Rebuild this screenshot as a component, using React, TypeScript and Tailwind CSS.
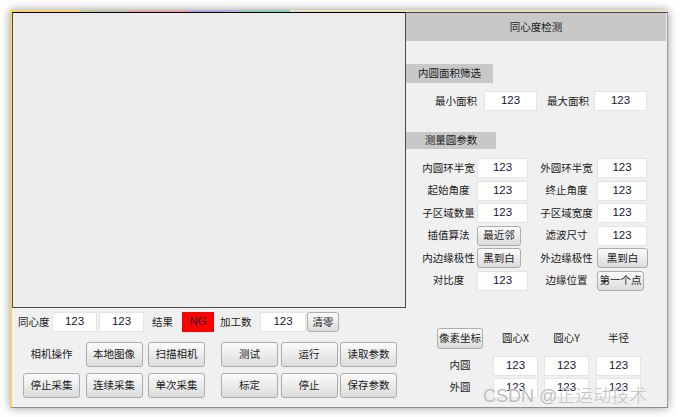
import type { ReactNode } from 'react'

function Btn({ children, className = '' }: { children: ReactNode; className?: string }) {
  return (
    <div
      className={`flex items-center justify-center rounded-[3px] border border-[#acacac] bg-linear-to-b from-[#fbfbfb] to-[#dcdcdc] text-[10.5px] text-[#1a1a1a] whitespace-nowrap ${className}`}
    >
      {children}
    </div>
  )
}

function Field({ className = '', value = '123' }: { className?: string; value?: string }) {
  return (
    <div
      className={`flex items-center justify-center bg-white border border-[#e4e4e4] font-['Liberation_Sans',sans-serif] text-[11.5px] text-[#161633] ${className}`}
    >
      {value}
    </div>
  )
}

function Label({ children, className = '' }: { children: ReactNode; className?: string }) {
  return <span className={`text-center text-[10.5px] text-[#1a1a1a] whitespace-nowrap ${className}`}>{children}</span>
}

const params: { l: string; left: 'f' | string; r: string; right: 'f' | string }[] = [
  { l: '内圆环半宽', left: 'f', r: '外圆环半宽', right: 'f' },
  { l: '起始角度', left: 'f', r: '终止角度', right: 'f' },
  { l: '子区域数量', left: 'f', r: '子区域宽度', right: 'f' },
  { l: '插值算法', left: '最近邻', r: '滤波尺寸', right: 'f' },
  { l: '内边缘极性', left: '黑到白', r: '外边缘极性', right: '黑到白' },
  { l: '对比度', left: 'f', r: '边缘位置', right: '第一个点' },
]

export default function App() {
  return (
    <div className="relative w-[680px] h-[417px] bg-white overflow-hidden font-['Noto_Sans_CJK_SC',sans-serif] leading-none">
      <div className="absolute left-[10px] top-[10px] w-[658px] h-[398px] bg-[#f0f0f0] shadow-[0_0_9px_rgba(0,0,0,0.4)] flex flex-col">
        {/* title strip */}
        <div className="flex h-[2px] shrink-0">
          <div className="w-[71px] bg-[#f6d56a]" />
          <div className="w-[49px] bg-[#c3c7a8]" />
          <div className="w-[58px] bg-[#e9a7a4]" />
          <div className="w-[50px] bg-[#b8a9d8]" />
          <div className="w-[52px] bg-[#93cbb6]" />
          <div className="flex-1 bg-[#e9e0c0]" />
        </div>

        <div className="flex flex-1 min-h-0 border-l-2 border-[#f3d46a] border-b border-b-[#8e8e8e]">
          {/* left: image view and controls */}
          <div className="w-[394px] flex flex-col">
            <div className="h-[296px] bg-[#ececec] border border-[#4a4a4a] border-t-black" />

            <div className="flex items-center mt-[4px] h-[20px] pl-[6px]">
              <Label className="w-[34px] text-left">同心度</Label>
              <Field className="w-[45px] h-[20px]" />
              <Field className="w-[45px] h-[20px] ml-[2px]" />
              <Label className="w-[30px] ml-[8px] text-left">结果</Label>
              <div className="w-[32px] h-[20px] bg-[#ff0000] flex items-center justify-center font-['Liberation_Sans',sans-serif] text-[11.5px] text-[#1a1a3a]">
                NG
              </div>
              <Label className="w-[40px] ml-[6px] text-left">加工数</Label>
              <Field className="w-[46px] h-[20px]" />
              <Btn className="w-[32px] h-[20px] ml-[1px]">清零</Btn>
            </div>

            <div className="flex mt-[10px] pl-[11px]">
              <div className="grid grid-cols-[57px_57px_57px] grid-rows-[25px_25px] gap-x-[5.5px] gap-y-[6px]">
                <Label className="self-center">相机操作</Label>
                <Btn>本地图像</Btn>
                <Btn>扫描相机</Btn>
                <Btn>停止采集</Btn>
                <Btn>连续采集</Btn>
                <Btn>单次采集</Btn>
              </div>
              <div className="ml-[16px] grid grid-cols-[57px_57px_57px] grid-rows-[25px_25px] gap-x-[2.5px] gap-y-[6px]">
                <Btn>测试</Btn>
                <Btn>运行</Btn>
                <Btn>读取参数</Btn>
                <Btn>标定</Btn>
                <Btn>停止</Btn>
                <Btn>保存参数</Btn>
              </div>
            </div>
          </div>

          {/* right: detection settings */}
          <div className="w-[262px] flex flex-col border-t border-[#4a4a4a] pr-[1px] border-r border-r-[#9a9a9a] overflow-hidden">
            <div className="h-[28px] shrink-0 bg-[#c8c8c8] flex items-center justify-center text-[10.5px] text-[#1a1a1a]">
              同心度检测
            </div>

            <div className="mt-[23px] w-[87px] h-[19px] bg-[#c8c8c8] flex items-center justify-center text-[10.5px] text-[#1a1a1a]">
              内圆面积筛选
            </div>
            <div className="flex items-center mt-[8px] h-[20px]">
              <Label className="w-[42px] ml-[29px]">最小面积</Label>
              <Field className="w-[53px] h-[20px] ml-[7px]" />
              <Label className="w-[41px] ml-[10px]">最大面积</Label>
              <Field className="w-[53px] h-[20px] ml-[6px]" />
            </div>

            <div className="mt-[21px] w-[90px] h-[17px] bg-[#c8c8c8] flex items-center justify-center text-[10.5px] text-[#1a1a1a]">
              测量圆参数
            </div>
            <div className="mt-[9px] flex flex-col gap-[2.5px]">
              {params.map((p) => (
                <div key={p.l} className="flex items-center h-[20px]">
                  <Label className="w-[57px] ml-[14px]">{p.l}</Label>
                  <div className="w-[51px] h-[20px]">
                    {p.left === 'f' ? <Field className="w-full h-full" /> : <Btn className="w-[44px] h-[20px]">{p.left}</Btn>}
                  </div>
                  <Label className="w-[61px] ml-[8px]">{p.r}</Label>
                  <div className="w-[51px] h-[20px]">
                    {p.right === 'f' ? (
                      <Field className="w-[50px] h-full" />
                    ) : (
                      <Btn className={`h-[20px] ${p.right === '第一个点' ? 'w-[47px]' : 'w-[51px]'}`}>{p.right}</Btn>
                    )}
                  </div>
                </div>
              ))}
            </div>

            <div className="mt-[37px] flex items-center h-[21px] ml-[31px]">
              <Btn className="w-[46px] h-[21px]">像素坐标</Btn>
              <Label className="w-[45px] ml-[10px]">圆心X</Label>
              <Label className="w-[45px] ml-[6px]">圆心Y</Label>
              <Label className="w-[45px] ml-[7px]">半径</Label>
            </div>
            <div className="mt-[7px] flex items-center h-[20px] ml-[31px]">
              <Label className="w-[46px]">内圆</Label>
              <Field className="w-[45px] h-[20px] ml-[10px]" />
              <Field className="w-[45px] h-[20px] ml-[6px]" />
              <Field className="w-[45px] h-[20px] ml-[7px]" />
            </div>
            <div className="mt-[2px] flex items-center h-[20px] ml-[31px]">
              <Label className="w-[46px]">外圆</Label>
              <Field className="w-[45px] h-[20px] ml-[10px]" />
              <Field className="w-[45px] h-[20px] ml-[6px]" />
              <Field className="w-[45px] h-[20px] ml-[7px]" />
            </div>
          </div>
        </div>
      </div>

      {/* watermark */}
      <div className="absolute left-[483px] top-[385px] text-[18px] leading-none text-[#bdbdbd] whitespace-nowrap [text-shadow:0_0_1px_#fff]">
        <span className="font-['Liberation_Sans',sans-serif]">CSDN @</span>
        <span className="font-['Noto_Sans_CJK_SC',sans-serif] font-light">正运动技术</span>
      </div>
    </div>
  )
}
